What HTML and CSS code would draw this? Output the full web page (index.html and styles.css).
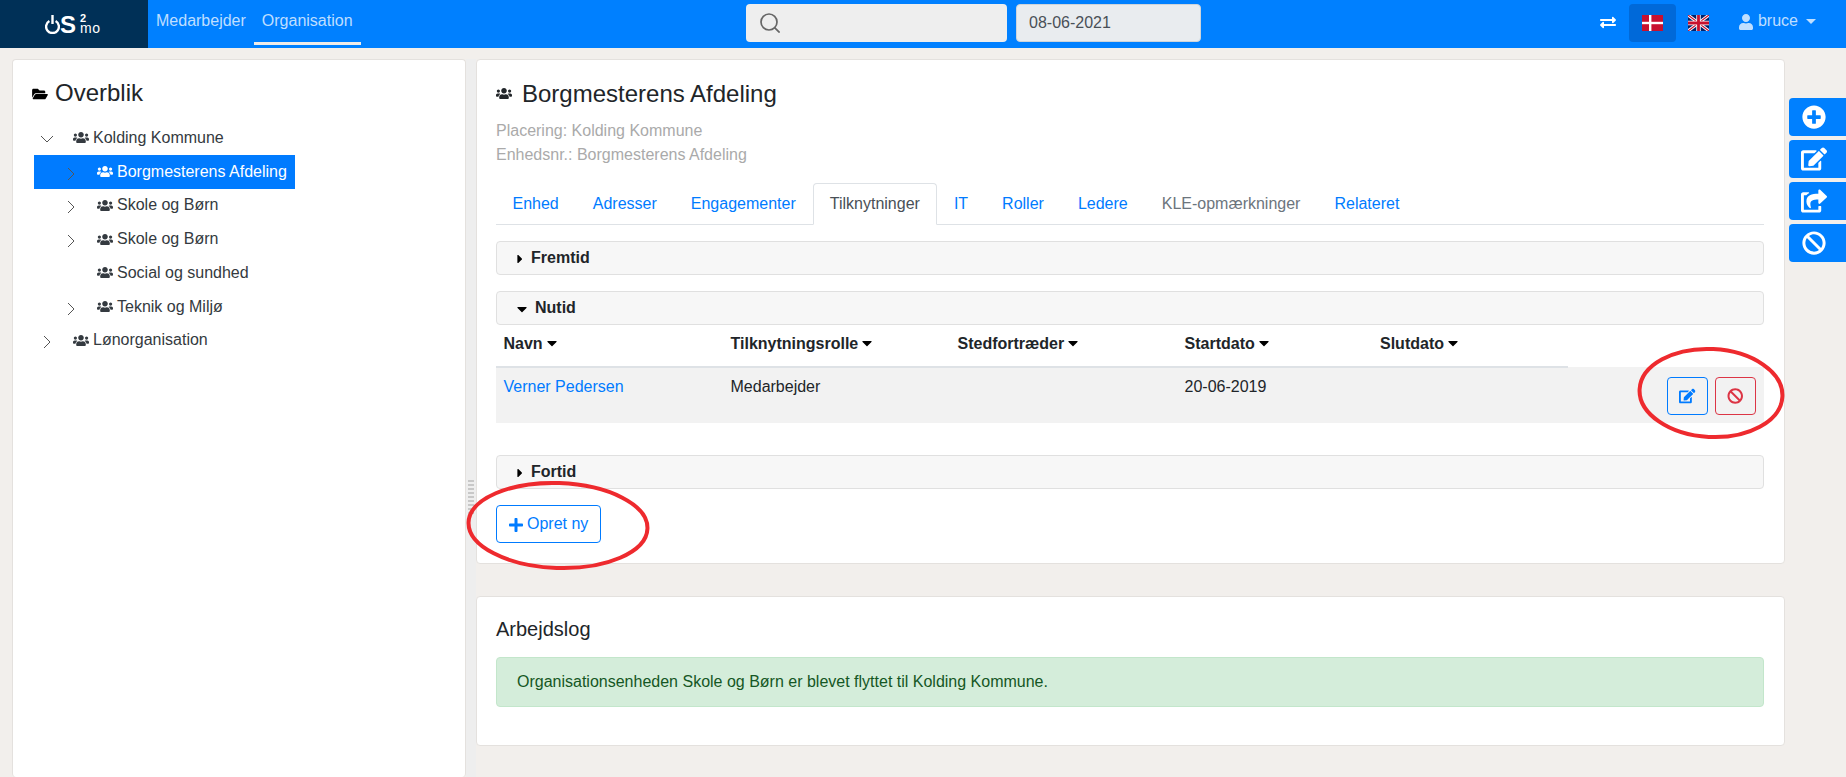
FILE: index.html
```html
<!DOCTYPE html>
<html lang="da">
<head>
    <meta charset="UTF-8">
    <title>OS2mo - Organisation</title>
    <link rel="stylesheet" href="styles.css">
</head>
<body>

<svg class="icon-defs" width="0" height="0">
    <symbol id="i-users" viewBox="0 0 640 512"><path d="M96 224c35.3 0 64-28.7 64-64s-28.7-64-64-64-64 28.7-64 64 28.7 64 64 64zm448 0c35.3 0 64-28.7 64-64s-28.7-64-64-64-64 28.7-64 64 28.7 64 64 64zm32 32h-64c-17.6 0-33.5 7.1-45.1 18.6 40.3 22.1 68.9 62 75.1 109.4h66c17.7 0 32-14.3 32-32v-32c0-35.3-28.7-64-64-64zm-256 0c61.9 0 112-50.1 112-112S381.9 32 320 32 208 82.1 208 144s50.1 112 112 112zm76.8 32h-8.3c-20.8 10-43.9 16-68.5 16s-47.6-6-68.5-16h-8.3C179.6 288 128 339.6 128 403.2V432c0 26.5 21.5 48 48 48h288c26.5 0 48-21.5 48-48v-28.8c0-63.6-51.6-115.2-115.2-115.2zm-223.7-13.4C161.5 263.1 145.6 256 128 256H64c-35.3 0-64 28.7-64 64v32c0 17.7 14.3 32 32 32h65.9c6.3-47.4 34.9-87.3 75.2-109.4z"/></symbol>
    <symbol id="i-edit" viewBox="0 0 576 512"><path d="M402.6 83.2l90.2 90.2c3.8 3.8 3.8 10 0 13.8L274.4 405.6l-92.8 10.3c-12.4 1.4-22.9-9.1-21.5-21.5l10.3-92.8L388.8 83.2c3.8-3.8 10-3.8 13.8 0zm162-22.9l-48.8-48.8c-15.2-15.2-39.9-15.2-55.2 0l-35.4 35.4c-3.8 3.8-3.8 10 0 13.8l90.2 90.2c3.8 3.8 10 3.8 13.8 0l35.4-35.4c15.2-15.3 15.2-40 0-55.2zM384 346.2V448H64V128h229.8c3.2 0 6.2-1.3 8.5-3.5l40-40c7.6-7.6 2.2-20.5-8.5-20.5H48C21.5 64 0 85.5 0 112v352c0 26.5 21.5 48 48 48h352c26.5 0 48-21.5 48-48V306.2c0-10.7-12.9-16-20.5-8.5l-40 40c-2.2 2.3-3.5 5.3-3.5 8.5z"/></symbol>
    <symbol id="i-ban" viewBox="0 0 512 512"><path d="M256 8C119.034 8 8 119.033 8 256s111.034 248 248 248 248-111.034 248-248S392.967 8 256 8zm130.108 117.892c65.448 65.448 70 165.481 20.677 235.637L150.47 105.216c70.204-49.356 170.226-44.735 235.638 20.676zM125.892 386.108c-65.448-65.448-70-165.481-20.677-235.637L361.53 406.784c-70.203 49.356-170.226 44.736-235.638-20.676z"/></symbol>
    <symbol id="i-plus-circle" viewBox="0 0 512 512"><path d="M256 8C119 8 8 119 8 256s111 248 248 248 248-111 248-248S393 8 256 8zm144 276c0 6.6-5.4 12-12 12h-92v92c0 6.6-5.4 12-12 12h-56c-6.6 0-12-5.4-12-12v-92h-92c-6.6 0-12-5.4-12-12v-56c0-6.6 5.4-12 12-12h92v-92c0-6.6 5.4-12 12-12h56c6.6 0 12 5.4 12 12v92h92c6.6 0 12 5.4 12 12v56z"/></symbol>
    <symbol id="i-share" viewBox="0 0 576 512"><path d="M568.482 177.448L424.479 313.433C409.3 327.768 384 317.14 384 295.985v-71.963c-144.575.97-205.566 35.113-164.775 171.353 4.483 14.973-12.846 26.567-25.006 17.33C155.252 383.105 120 326.488 120 269.339c0-143.937 117.599-172.5 264-173.312V24.012c0-21.174 25.317-31.768 40.479-17.448l144.003 135.988c10.02 9.463 10.028 25.425 0 34.896zM384 379.128V448H64V128h50.916a11.99 11.99 0 0 0 8.648-3.693c14.953-15.568 32.237-27.89 51.043-37.708C185.749 80.781 181.576 64 169.038 64H48C21.49 64 0 85.49 0 112v352c0 26.51 21.49 48 48 48h352c26.51 0 48-21.49 48-48v-88.806c0-8.288-8.197-13.066-15.973-10.302a71.943 71.943 0 0 1-34.224 3.266c-7.287-1.035-13.803 4.664-13.803 11.973z"/></symbol>
    <symbol id="i-caret-down" viewBox="0 0 320 512"><path d="M31.3 192h257.3c17.8 0 26.7 21.5 14.1 34.1L174.1 354.8c-7.8 7.8-20.5 7.8-28.3 0L17.2 226.1C4.6 213.5 13.5 192 31.3 192z"/></symbol>
    <symbol id="i-caret-right" viewBox="0 0 192 512"><path d="M0 384.662V127.338c0-17.818 21.543-26.727 34.142-14.142l128.662 128.662c7.81 7.81 7.81 20.474 0 28.284L34.142 398.804C21.543 411.389 0 402.48 0 384.662z"/></symbol>
    <symbol id="i-chev-right" viewBox="0 0 8 14"><path d="M1 1l6 6-6 6" fill="none" stroke="currentColor" stroke-width="1"/></symbol>
    <symbol id="i-chev-down" viewBox="0 0 14 8"><path d="M1 1l6 6 6-6" fill="none" stroke="currentColor" stroke-width="1"/></symbol>
</svg>

<header class="topbar">
    <div class="logo">
        <svg class="logo-power" viewBox="0 0 15 19"><path d="M4.4 6a6.4 6.4 0 1 0 6.2 0" fill="none" stroke="#fff" stroke-width="2.4"/><path d="M7.5 0v9" stroke="#fff" stroke-width="2.4"/></svg>
        <span class="logo-s">S</span>
        <span class="logo-small">2<br>mo</span>
    </div>
    <nav class="mainnav">
        <a href="#">Medarbejder</a>
        <a href="#" class="active">Organisation</a>
    </nav>
    <div class="searchbox">
        <svg viewBox="0 0 20 20" width="20" height="20"><circle cx="9" cy="9" r="8" fill="none" stroke="#666" stroke-width="1.7"/><path d="M14.6 14.6l5 5" stroke="#666" stroke-width="1.7"/></svg>
    </div>
    <div class="datebox">08-06-2021</div>
    <div class="topright">
        <svg class="exchange" viewBox="0 0 512 512"><path d="M0 168v-16c0-13 11-24 24-24h360V80c0-21 26-32 41-17l80 80c9 9 9 25 0 34l-80 80c-15 15-41 4-41-17v-48H24c-13 0-24-11-24-24zm488 120H128v-48c0-21-26-32-41-17l-80 80c-9 9-9 25 0 34l80 80c15 15 41 4 41-17v-48h360c13 0 24-11 24-24v-16c0-13-11-24-24-24z" fill="#fff"/></svg>
        <div class="langbtn active">
            <svg class="flag" viewBox="0 0 21 16"><rect width="21" height="16" fill="#c8102e"/><rect x="7" width="2.4" height="16" fill="#fff"/><rect y="6.8" width="21" height="2.4" fill="#fff"/></svg>
        </div>
        <div class="langbtn uk">
            <svg class="flag" viewBox="0 0 21 16"><rect width="21" height="16" fill="#012169"/><path d="M0 0l21 16M21 0L0 16" stroke="#fff" stroke-width="3"/><path d="M0 0l21 16M21 0L0 16" stroke="#c8102e" stroke-width="1.2"/><path d="M10.5 0v16M0 8h21" stroke="#fff" stroke-width="4.4"/><path d="M10.5 0v16M0 8h21" stroke="#c8102e" stroke-width="2.8"/></svg>
        </div>
        <div class="usermenu">
            <svg class="user-icon" viewBox="0 0 448 512"><path d="M224 256c70.7 0 128-57.3 128-128S294.7 0 224 0 96 57.3 96 128s57.3 128 128 128zm89.6 32h-16.7c-22.2 10.2-46.9 16-72.9 16s-50.6-5.8-72.9-16h-16.7C60.2 288 0 348.2 0 422.4V464c0 26.5 21.5 48 48 48h352c26.5 0 48-21.5 48-48v-41.6c0-74.2-60.2-134.4-134.4-134.4z"/></svg>
            <span>bruce</span>
            <i class="dropcaret"></i>
        </div>
    </div>
</header>

<main class="layout">
    <aside class="leftpane">
        <section class="card treecard">
            <h1 class="card-title tree-title">
                <svg class="folder" viewBox="0 0 576 512"><path d="M572.694 292.093L500.27 416.248A63.997 63.997 0 0 1 444.989 448H45.025c-18.523 0-30.064-20.093-20.731-36.093l72.424-124.155A64 64 0 0 1 152 256h399.964c18.523 0 30.064 20.093 20.73 36.093zM152 224h328v-48c0-26.51-21.49-48-48-48H272l-64-64H48C21.49 64 0 85.49 0 112v278.046l69.077-118.418C86.214 242.25 117.989 224 152 224z"/></svg>
                Overblik
            </h1>
            <ul class="tree">
                <li class="node root"><svg class="chev-d"><use href="#i-chev-down"/></svg><svg class="users"><use href="#i-users"/></svg>Kolding Kommune</li>
                <li class="node child selected"><svg class="chev-r"><use href="#i-chev-right"/></svg><svg class="users"><use href="#i-users"/></svg>Borgmesterens Afdeling</li>
                <li class="node child"><svg class="chev-r"><use href="#i-chev-right"/></svg><svg class="users"><use href="#i-users"/></svg>Skole og Børn</li>
                <li class="node child"><svg class="chev-r"><use href="#i-chev-right"/></svg><svg class="users"><use href="#i-users"/></svg>Skole og Børn</li>
                <li class="node child leaf"><svg class="users"><use href="#i-users"/></svg>Social og sundhed</li>
                <li class="node child"><svg class="chev-r"><use href="#i-chev-right"/></svg><svg class="users"><use href="#i-users"/></svg>Teknik og Miljø</li>
                <li class="node root"><svg class="chev-r"><use href="#i-chev-right"/></svg><svg class="users"><use href="#i-users"/></svg>Lønorganisation</li>
            </ul>
        </section>
    </aside>

    <div class="gutter"><span class="grip"></span></div>

    <div class="content">
        <section class="card unitcard">
            <h1 class="card-title unit-title"><svg class="users"><use href="#i-users"/></svg>Borgmesterens Afdeling</h1>
            <p class="meta">Placering: Kolding Kommune</p>
            <p class="meta">Enhedsnr.: Borgmesterens Afdeling</p>

            <ul class="tabs">
                <li><a href="#">Enhed</a></li>
                <li><a href="#">Adresser</a></li>
                <li><a href="#">Engagementer</a></li>
                <li><a href="#" class="active">Tilknytninger</a></li>
                <li><a href="#">IT</a></li>
                <li><a href="#">Roller</a></li>
                <li><a href="#">Ledere</a></li>
                <li><a href="#" class="disabled">KLE-opmærkninger</a></li>
                <li><a href="#">Relateret</a></li>
            </ul>

            <div class="panelhead"><svg class="caret-r"><use href="#i-caret-right"/></svg>Fremtid</div>
            <div class="panelhead"><svg class="caret-d"><use href="#i-caret-down"/></svg>Nutid</div>

            <table class="grid">
                <colgroup>
                    <col class="w-wide"><col class="w-wide"><col class="w-wide"><col class="w-mid"><col class="w-mid"><col>
                </colgroup>
                <thead>
                    <tr>
                        <th>Navn<svg class="sort"><use href="#i-caret-down"/></svg></th>
                        <th>Tilknytningsrolle<svg class="sort"><use href="#i-caret-down"/></svg></th>
                        <th>Stedfortræder<svg class="sort"><use href="#i-caret-down"/></svg></th>
                        <th>Startdato<svg class="sort"><use href="#i-caret-down"/></svg></th>
                        <th>Slutdato<svg class="sort"><use href="#i-caret-down"/></svg></th>
                        <th class="noline"></th>
                    </tr>
                </thead>
                <tbody>
                    <tr>
                        <td><a href="#">Verner Pedersen</a></td>
                        <td>Medarbejder</td>
                        <td></td>
                        <td>20-06-2019</td>
                        <td></td>
                        <td class="actions">
                            <button class="iconbtn blue"><svg><use href="#i-edit"/></svg></button>
                            <button class="iconbtn red"><svg><use href="#i-ban"/></svg></button>
                        </td>
                    </tr>
                </tbody>
            </table>

            <div class="panelhead fortid"><svg class="caret-r"><use href="#i-caret-right"/></svg>Fortid</div>

            <button class="createbtn">
                <svg viewBox="0 0 448 512"><path d="M416 208H272V64c0-17.67-14.33-32-32-32h-32c-17.67 0-32 14.33-32 32v144H32c-17.67 0-32 14.33-32 32v32c0 17.67 14.33 32 32 32h144v144c0 17.67 14.33 32 32 32h32c17.67 0 32-14.33 32-32V304h144c17.67 0 32-14.33 32-32v-32c0-17.67-14.33-32-32-32z"/></svg>
                Opret ny
            </button>
        </section>

        <section class="card logcard">
            <h2>Arbejdslog</h2>
            <div class="alert">Organisationsenheden Skole og Børn er blevet flyttet til Kolding Kommune.</div>
        </section>
    </div>

    <div class="sidebtns">
        <button><svg class="sq"><use href="#i-plus-circle"/></svg></button>
        <button><svg><use href="#i-edit"/></svg></button>
        <button><svg><use href="#i-share"/></svg></button>
        <button><svg class="sq"><use href="#i-ban"/></svg></button>
    </div>
</main>

<!-- red rings drawn on top of the screenshot -->
<svg class="rings" viewBox="0 0 1846 777">
    <ellipse cx="1711" cy="393" rx="71.5" ry="44" transform="rotate(3 1711 393)"/>
    <ellipse cx="558" cy="525.5" rx="89.5" ry="42.5" transform="rotate(2 558 525.5)"/>
</svg>

</body>
</html>
```

FILE: styles.css
```css
* {
    box-sizing: border-box;
}
html, body {
    height: 100%;
}
body {
    margin: 0;
    font-family: "Liberation Sans", Arial, sans-serif;
    font-size: 16px;
    line-height: 24px;
    color: #212529;
    background: #f2efec;
    overflow: hidden;
    position: relative;
}
a {
    color: #007bff;
    text-decoration: none;
}
ul {
    list-style: none;
    margin: 0;
    padding: 0;
}
.icon-defs {
    position: absolute;
}

/* top bar */
.topbar {
    display: flex;
    align-items: flex-start;
    height: 48px;
    background: #0080ff;
}
.logo {
    display: flex;
    align-items: center;
    width: 148px;
    height: 48px;
    padding-left: 45px;
    background: #003057;
    color: #fff;
}
.logo-power {
    width: 15px;
    height: 19px;
}
.logo-s {
    font-size: 24px;
    font-weight: bold;
    line-height: 26px;
    margin-top: 2px;
}
.logo-small {
    margin: 0 0 2px 4px;
    font-size: 14px;
    line-height: 10px;
    letter-spacing: 0.5px;
}
.logo-small::first-line {
    font-size: 11px;
    font-weight: bold;
}
.mainnav {
    display: flex;
    width: 598px;
}
.mainnav a {
    height: 45px;
    padding: 9px 8px 0;
    color: rgba(255, 255, 255, 0.75);
}
.mainnav a.active {
    border-bottom: 3px solid #f0ece8;
}
.searchbox {
    display: flex;
    align-items: center;
    width: 261px;
    height: 38px;
    margin-top: 4px;
    padding-left: 14px;
    background: #eee;
    border-radius: 4px;
}
.datebox {
    width: 185px;
    height: 38px;
    margin: 4px 0 0 9px;
    padding: 6px 12px;
    background: #e9ecef;
    border: 1px solid #ced4da;
    border-radius: 4px;
    color: #495057;
}
.topright {
    display: flex;
    align-items: center;
    height: 38px;
    margin: 4px 0 0 auto;
    padding-right: 30px;
}
.exchange {
    width: 16px;
    height: 16px;
    margin-right: 13px;
}
.langbtn {
    display: flex;
    align-items: center;
    justify-content: center;
    width: 47px;
    height: 38px;
    border-radius: 4px;
}
.langbtn.uk {
    width: 45px;
}
.langbtn.active {
    background: #0069d9;
}
.flag {
    width: 21px;
    height: 16px;
}
.usermenu {
    display: flex;
    align-items: center;
    margin: -4px 0 0 18px;
    color: rgba(255, 255, 255, 0.75);
}
.user-icon {
    width: 14px;
    height: 16px;
    margin: 2px 5px 0 0;
    fill: rgba(255, 255, 255, 0.75);
}
.dropcaret {
    width: 0;
    height: 0;
    margin-left: 8px;
    border-top: 5px solid rgba(255, 255, 255, 0.75);
    border-left: 5px solid transparent;
    border-right: 5px solid transparent;
}

/* page columns */
.layout {
    display: flex;
    height: 729px;
}
.leftpane {
    width: 466px;
    padding: 11px 0 0 12px;
}
.gutter {
    display: flex;
    align-items: center;
    justify-content: center;
    width: 10px;
    margin-top: 11px;
    padding: 158px 0 0;
    background: #eee;
}
.grip {
    width: 6px;
    height: 36px;
    background-image: radial-gradient(circle, #c8c8c8 1.2px, transparent 1.4px);
    background-size: 3px 4px;
}
.content {
    display: flex;
    flex-direction: column;
    gap: 32px;
    width: 1309px;
    padding-top: 11px;
}
.sidebtns {
    display: flex;
    flex-direction: column;
    gap: 4px;
    width: 57px;
    margin: 50px 0 0 4px;
}
.sidebtns button {
    display: flex;
    align-items: center;
    justify-content: center;
    width: 57px;
    height: 38px;
    padding: 0 8px 0 0;
    background: #0080ff;
    border: none;
    border-radius: 4px 0 0 4px;
    fill: #fff;
}
.sidebtns svg {
    width: 26px;
    height: 24px;
}
.sidebtns svg.sq {
    width: 24px;
}

/* cards */
.card {
    background: #fff;
    border: 1px solid #e4e1de;
    border-radius: 4px;
    padding: 19px;
}
.card-title {
    display: flex;
    align-items: center;
    margin: 0;
    font-size: 24px;
    font-weight: normal;
    line-height: 29px;
}
.treecard {
    height: 100%;
    border-bottom: none;
}
.tree-title {
    margin-top: -1px;
}
.folder {
    width: 16px;
    height: 14px;
    margin: 2px 7px 0 0;
}
.users {
    width: 16px;
    height: 13px;
    fill: currentColor;
}

/* tree */
.tree {
    margin-top: 14px;
}
.node {
    display: flex;
    align-items: center;
    height: 33.75px;
    width: 261px;
    margin-left: 2px;
    color: #343a40;
    white-space: nowrap;
}
.node svg {
    flex: none;
}
.node.root {
    padding-left: 6px;
}
.node.child {
    padding-left: 33px;
}
.node.leaf {
    padding-left: 63px;
}
.node.selected {
    background: #007bff;
    color: #fff;
}
.node.selected .users {
    fill: #fff;
}
.chev-r {
    width: 8px;
    height: 14px;
    margin: 4px 22px 0 0;
    color: #555;
}
.root .chev-r {
    margin-left: 3px;
    margin-right: 22px;
}
.chev-d {
    width: 14px;
    height: 8px;
    margin: 3px 19px 0 0;
    color: #555;
}
.node .users {
    margin-right: 4px;
}

/* unit card */
.unitcard {
    padding: 19px 20px 20px 19px;
}
.unit-title {
    margin-bottom: 11px;
}
.unit-title .users {
    margin-right: 10px;
}
.meta {
    margin: 0;
    color: #aaa;
}
.tabs {
    display: flex;
    margin: 16px 0;
    height: 42px;
    border-bottom: 1px solid #dee2e6;
}
.tabs a {
    display: block;
    height: 42px;
    padding: 8px 16.5px 8px 15.5px;
    border: 1px solid transparent;
    border-radius: 4px 4px 0 0;
}
.tabs a.active {
    color: #495057;
    background: #fff;
    border-color: #dee2e6 #dee2e6 #fff;
}
.tabs a.disabled {
    color: #6c757d;
}
.panelhead {
    display: flex;
    align-items: center;
    height: 34px;
    margin-bottom: 16px;
    padding-left: 20px;
    background: #f7f7f7;
    border: 1px solid #e0e0e0;
    border-radius: 4px;
    font-weight: bold;
}
.caret-r {
    width: 6px;
    height: 14px;
    margin-right: 8px;
    margin-top: 2px;
}
.caret-d {
    width: 10px;
    height: 16px;
    margin-right: 8px;
    margin-top: 2px;
}

/* table */
.grid {
    width: 100%;
    margin: -16px 0 32px;
    border-collapse: collapse;
    table-layout: fixed;
}
.w-wide {
    width: 227px;
}
.w-mid {
    width: 195.5px;
}
.grid th {
    height: 42px;
    padding: 0 8px 3px 7.5px;
    text-align: left;
    border-bottom: 2px solid #dee2e6;
}
.grid th.noline {
    border-bottom: none;
}
.sort {
    width: 10px;
    height: 16px;
    margin-left: 4px;
    vertical-align: -2px;
}
.grid tbody tr {
    background: #f2f2f2;
}
.grid td {
    height: 56px;
    padding: 7px 8px 0 7.5px;
    vertical-align: top;
}
.grid td.actions {
    padding: 10px 8px 0 0;
    text-align: right;
}
.iconbtn {
    display: inline-block;
    width: 41.5px;
    height: 38px;
    padding: 0;
    margin-left: 2px;
    background: transparent;
    border: 1px solid;
    border-radius: 4px;
    vertical-align: top;
}
.iconbtn svg {
    display: block;
    width: 16.5px;
    height: 16px;
    margin: 0 auto;
    fill: currentColor;
}
.iconbtn.blue {
    color: #007bff;
    border-color: #007bff;
}
.iconbtn.red {
    color: #dc3545;
    border-color: #dc3545;
}
.createbtn {
    display: flex;
    align-items: center;
    width: 105px;
    height: 38px;
    padding: 0 0 0 12px;
    background: #fff;
    border: 1px solid #007bff;
    border-radius: 4px;
    color: #007bff;
    font: inherit;
}
.createbtn svg {
    width: 14px;
    height: 16px;
    margin: 2px 4px 0 0;
    fill: #007bff;
}

/* log card */
.logcard {
    padding: 20px 20px 38px 19px;
}
.logcard h2 {
    margin: 0 0 16px;
    font-size: 20px;
    font-weight: normal;
    line-height: 24px;
}
.alert {
    height: 50px;
    padding: 12px 20px;
    background: #d4edda;
    border: 1px solid #c3e6cb;
    border-radius: 4px;
    color: #155724;
}

/* annotations */
.rings {
    position: absolute;
    top: 0;
    left: 0;
    width: 1846px;
    height: 777px;
    pointer-events: none;
}
.rings ellipse {
    fill: none;
    stroke: #ee2a2e;
    stroke-width: 4;
}
```
